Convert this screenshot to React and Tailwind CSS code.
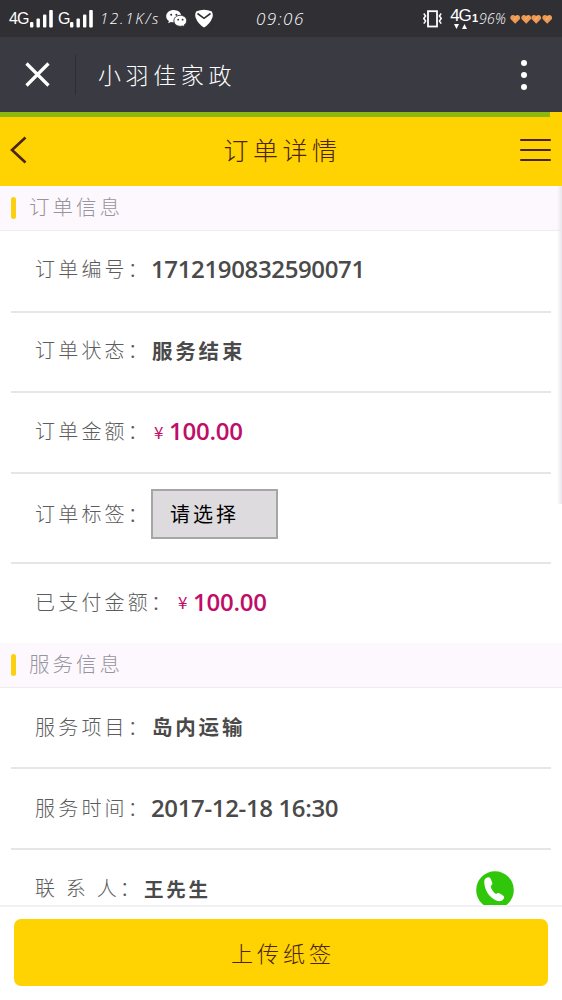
import React from "react";

const cjk = "font-['Noto_Sans_CJK_SC',sans-serif]";
const num = "font-['Open_Sans','Noto_Sans_CJK_SC',sans-serif]";

function Signal({ className }) {
  return (
    <svg className={className} width="23" height="18" viewBox="0 0 23 18" fill="#fff">
      <rect x="0" y="12" width="3.4" height="5.5" rx="1" />
      <rect x="6.5" y="8.5" width="3.4" height="9" rx="1" />
      <rect x="13" y="4.5" width="3.4" height="13" rx="1" />
      <rect x="19.2" y="0" width="3.6" height="17.5" rx="1" />
    </svg>
  );
}

function StatusBar() {
  return (
    <div className="flex h-[37px] shrink-0 items-center bg-[#303034] pl-[9px] text-white font-['Liberation_Sans',sans-serif]">
      <span className="w-[21px] text-[16px] tracking-[-0.8px]">4G</span>
      <Signal className="w-[23px] shrink-0" />
      <span className="ml-[5px] w-[12px] text-[16px]">G</span>
      <Signal className="w-[23px] shrink-0" />
      <span className={`${num} ml-[7px] w-[66px] whitespace-nowrap text-[15px] font-light italic tracking-[1.8px]`}>12.1K/s</span>
      <svg className="shrink-0" width="21" height="18" viewBox="0 0 21 18">
        <path d="M7.8 0C3.5 0 .2 2.7.2 6.2c0 2 1 3.6 2.7 4.7l-.7 2.3 2.7-1.3c1 .3 1.9.4 2.9.4 4.300 0 7.500-2.700 7.500-6.100S12.100 0 7.800 0z" fill="#fff" />
        <circle cx="5.200" cy="4.700" r="1" fill="#303034" />
        <circle cx="10.400" cy="4.700" r="1" fill="#303034" />
        <path d="M14.300 5.300c-3.700 0-6.400 2.400-6.400 5.500s2.700 5.500 6.400 5.500c.8 0 1.600-.1 2.300-.4l2.100 1.200-.6-2c1.600-1 2.600-2.500 2.600-4.300 0-3.100-2.800-5.500-6.400-5.500z" fill="#fff" stroke="#303034" strokeWidth=".9" />
        <circle cx="12.200" cy="9.700" r=".9" fill="#303034" />
        <circle cx="16.600" cy="9.700" r=".9" fill="#303034" />
      </svg>
      <svg className="ml-[8px] shrink-0" width="18" height="19" viewBox="0 0 18 19">
        <path d="M1.500 2.300Q9-.9 16.500 2.300 18.500 5 17.400 8.500 15 15 9 18.500 3 15 .6 8.500-.5 5 1.500 2.300z" fill="#fff" />
        <path d="M2.500 4.500L9 9.300l6.500-4.800" fill="none" stroke="#303034" strokeWidth="1.600" />
      </svg>
      <span className={`${num} ml-[43px] w-[51px] whitespace-nowrap text-[17px] font-light italic tracking-[1.500px]`}>09:06</span>
      <svg className="ml-[116px] shrink-0" width="19" height="18" viewBox="0 0 19 18" fill="none" stroke="#fff">
        <rect x="5" y="1.200" width="9" height="15.300" strokeWidth="1.800" />
        <path d="M.8 3.500L2.600 6 .8 8.500 2.600 11 .8 13.700M18.200 3.500L16.400 6l1.800 2.500L16.400 11l1.800 2.700" strokeWidth="1.500" />
      </svg>
      <div className="ml-[9px] flex h-[21px] w-[19px] shrink-0 flex-col items-center">
        <span className="text-[17px] leading-[15px] tracking-[-1px]">4G</span>
        <svg className="mt-px" width="13" height="5" viewBox="0 0 13 5" fill="#fff">
          <path d="M0 0h5L2.500 5zM8 5h5L10.500 0z" />
        </svg>
      </div>
      <span className="w-[9px] pl-[2px] text-[11px] font-bold">1</span>
      <span className={`${num} w-[31px] whitespace-nowrap text-[14px] font-light italic tracking-[0.300px]`}>96%</span>
      <div className="flex">
        {[0, 1, 2, 3].map((i) => (
          <svg key={i} width="10.500" height="10" viewBox="0 0 10.500 10" fill="#ef9a52">
            <path d="M5.200 9.800L.8 5.300C-1 2.600 2.500-.9 5.200 2 7.900-.9 11.400 2.600 9.700 5.300z" />
            <path d="M7 2.500L4 6" stroke="#ffd0a0" strokeWidth=".6" />
          </svg>
        ))}
      </div>
    </div>
  );
}

function AppBar() {
  return (
    <div className="flex h-[75px] shrink-0 items-center bg-[#393a42] pl-[25px] pr-[35px]">
      <svg width="25" height="25" viewBox="0 0 25 25" stroke="#fff" strokeWidth="3.200">
        <path d="M1.500 1.500l22 22M23.500 1.500l-22 22" />
      </svg>
      <div className="ml-[25px] h-[40px] w-px bg-[#2e2f36]" />
      <span className={`${cjk} ml-[22px] grow text-[23px] font-light tracking-[4.600px] text-white`}>小羽佳家政</span>
      <div className="flex flex-col gap-[6px]">
        <i className="size-[6px] rounded-full bg-white" />
        <i className="size-[6px] rounded-full bg-white" />
        <i className="size-[6px] rounded-full bg-white" />
      </div>
    </div>
  );
}

function PageHeader() {
  return (
    <div className="flex h-[74px] shrink-0 flex-col bg-[#ffd202]">
      <div className="h-[5px] w-[550px] bg-[#8fb80e]" />
      <div className="flex grow items-center justify-between pl-[10px] pr-[11px] pb-[4px]">
        <svg className="mr-[15px]" width="17" height="28" viewBox="0 0 17 28" fill="none" stroke="#4a2510" strokeWidth="2.600">
          <path d="M15.500 1.500L2 14l13.500 12.500" />
        </svg>
        <span className={`${cjk} pl-[3px] text-[25px] font-light tracking-[4.500px] text-[#4a2510]`}>订单详情</span>
        <div className="flex w-[31px] flex-col gap-[8px]">
          <i className="h-[2px] rounded bg-[#4a2510]" />
          <i className="h-[2px] rounded bg-[#4a2510]" />
          <i className="h-[2px] rounded bg-[#4a2510]" />
        </div>
      </div>
    </div>
  );
}

function SectionTitle({ children }) {
  return (
    <div className="flex h-[45px] shrink-0 items-center border-b border-[#ededf0] bg-[#fcf8fe] pl-[11px]">
      <i className="h-[22px] w-[5px] rounded-full bg-[#fbd010]" />
      <span className={`${cjk} ml-[13px] pb-[3px] text-[20.500px] font-light leading-none tracking-[3px] text-[#98949b]`}>{children}</span>
    </div>
  );
}

function Row({ label, height, last, children, labelWidth = "w-[116px]" }) {
  return (
    <div className={`${height} mx-[11px] flex shrink-0 items-center pl-[24px] ${last ? "" : "border-b-2 border-[#e6e6e6]"}`}>
      <span className={`${cjk} ${labelWidth} shrink-0 whitespace-nowrap text-[20px] font-light leading-none tracking-[3.200px] text-[#5c5c5c]`}>{label}</span>
      {children}
    </div>
  );
}

const Digits = ({ children }) => (
  <span className={`${num} whitespace-nowrap text-[24px] font-semibold leading-none tracking-[-0.360px] text-[#4a4a4a]`}>{children}</span>
);

const Words = ({ children }) => (
  <span className={`${cjk} whitespace-nowrap pl-px text-[20.500px] font-bold leading-none tracking-[2.800px] text-[#4a4a4a]`}>{children}</span>
);

const Price = ({ children }) => (
  <span className="flex items-center pl-[2px] text-[#c00d68]">
    <span className={`${cjk} w-[16px] pl-px text-[17px] leading-none`}>¥</span>
    <span className={`${num} text-[24px] font-semibold leading-none tracking-[-0.250px]`}>{children}</span>
  </span>
);

export default function App() {
  return (
    <div className="relative flex h-[1000px] w-[562px] flex-col overflow-hidden bg-white">
      <StatusBar />
      <AppBar />
      <PageHeader />
      <main className="flex h-[719px] shrink-0 flex-col overflow-hidden">
        <SectionTitle>订单信息</SectionTitle>
        <Row label="订单编号：" height="h-[82px] pb-[4px]"><Digits>1712190832590071</Digits></Row>
        <Row label="订单状态：" height="h-[80px] pb-[4px]"><Words>服务结束</Words></Row>
        <Row label="订单金额：" height="h-[81px] pb-[3px]"><Price>100.00</Price></Row>
        <Row label="订单标签：" height="h-[90px] pb-[8px]">
          <button className={`${cjk} h-[50px] w-[127px] border-2 border-[#a6a6a6] bg-[#dedbde] pl-[17px] text-left text-[20px] leading-none tracking-[3px] text-black`}>请选择</button>
        </Row>
        <Row label="已支付金额：" height="h-[79px] pb-[4px]" labelWidth="w-[140px]" last><Price>100.00</Price></Row>
        <SectionTitle>服务信息</SectionTitle>
        <Row label="服务项目：" height="h-[81px] pb-[2px]"><Words>岛内运输</Words></Row>
        <Row label="服务时间：" height="h-[81px] pb-[2px]"><Digits>2017-12-18 16:30</Digits></Row>
        <Row label="联 系 人：" height="h-[80px] pb-[4px]" labelWidth="w-[108px]" last>
          <Words><span className="text-[19.500px]">王先生</span></Words>
          <svg className="ml-auto mr-[37px] mt-[4px] shrink-0" width="38" height="38" viewBox="0 0 38 38">
            <circle cx="19" cy="19" r="18.800" fill="#30c70a" />
            <path d="M9.500 7.500C12 5.500 14 5.800 15 8.500l1.300 3.600c.3 1.300-.2 2-1.600 3 .6 3.300 2.500 6.200 5.300 8 1.500-1.200 2.300-1.400 3.400-.8l3.300 2c2 1.400 1.900 2.800.2 4.500-1.800 1.700-4.400 2-7.300.5C12.800 25.700 8.900 19.400 8.300 12c-.1-2 .1-3.600 1.200-4.500z" fill="#fff" />
          </svg>
        </Row>
      </main>
      <footer className="flex h-[95px] shrink-0 items-start border-t-2 border-[#f1f1f3] bg-white px-[14px] pt-[12px]">
        <button className={`${cjk} h-[67px] w-full rounded-[7px] bg-[#ffd202] pl-[4px] text-[22px] font-light tracking-[4px] text-[#4a2510]`}>上传纸签</button>
      </footer>
      <div className="absolute right-0 top-[186px] h-[318px] w-[5px] bg-linear-to-r from-transparent to-[#e8e5eb]" />
    </div>
  );
}
